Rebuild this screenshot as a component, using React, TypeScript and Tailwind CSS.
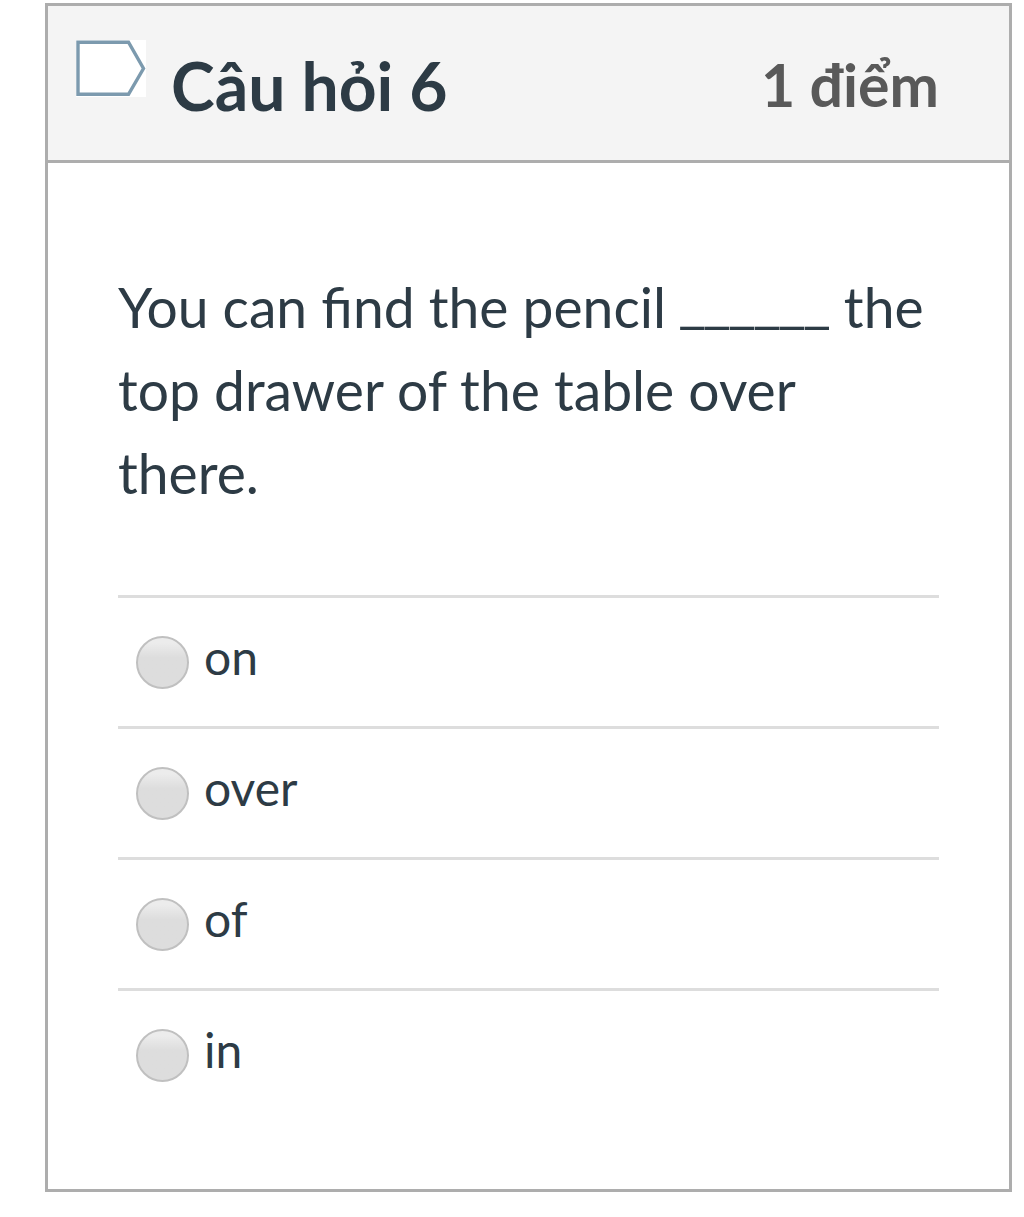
const answers = ["on", "over", "of", "in"];

const FlagIcon = () => (
  <svg width="70" height="57" viewBox="0 0 70 57" className="shrink-0">
    <rect width="70" height="57" fill="#fff" />
    <path
      d="M2 2.2H52.5L67.5 28.5L52.5 54.3H2Z"
      fill="#fff"
      stroke="#7c9aae"
      strokeWidth="3.4"
    />
  </svg>
);

const Answer = ({ label }: { label: string }) => (
  <label className="flex h-[131px] border-t-[3px] border-[#dddddd] pl-[18px] pt-[38px]">
    <input
      type="radio"
      name="answer"
      className="h-[53px] w-[53px] shrink-0 appearance-none rounded-full border-2 border-[#c0c0c0] bg-linear-to-b from-[#ececec] from-10% to-[#dddddd] to-40%"
    />
    <span className="ml-[15px] mt-[-7px] text-[48px] leading-[56px]">
      {label}
    </span>
  </label>
);

export default function App() {
  return (
    <div className="h-[1217px] w-[1024px] bg-white pl-[45px] pt-[3px] font-['Lato',sans-serif] text-[#2d3b45]">
      <div className="h-[1189px] w-[967px] border-[3px] border-[#adadad] bg-white">
        <div className="flex h-[157px] justify-between border-b-[3px] border-[#adadad] bg-[#f4f4f4] pl-[28px] pr-[70px]">
          <div className="flex pt-[34px]">
            <FlagIcon />
            <h2 className="ml-[25px] mt-[6px] text-[66px] font-bold leading-[80px]">
              Câu hỏi 6
            </h2>
          </div>
          <span className="mt-[43px] text-[59px] font-bold leading-[72px] text-[#595959]">
            1 điểm
          </span>
        </div>
        <div className="px-[70px] pt-[103px]">
          <p className="h-[329px] whitespace-nowrap text-[55.2px] leading-[83px]">
            You can find the pencil{" "}
            <span className="relative top-[-6px] font-['Open_Sans',sans-serif] leading-none tracking-[0.75px]">
              ______
            </span>{" "}
            the
            <br />
            top drawer of the table over
            <br />
            there.
          </p>
          {answers.map((answer) => (
            <Answer key={answer} label={answer} />
          ))}
        </div>
      </div>
    </div>
  );
}
